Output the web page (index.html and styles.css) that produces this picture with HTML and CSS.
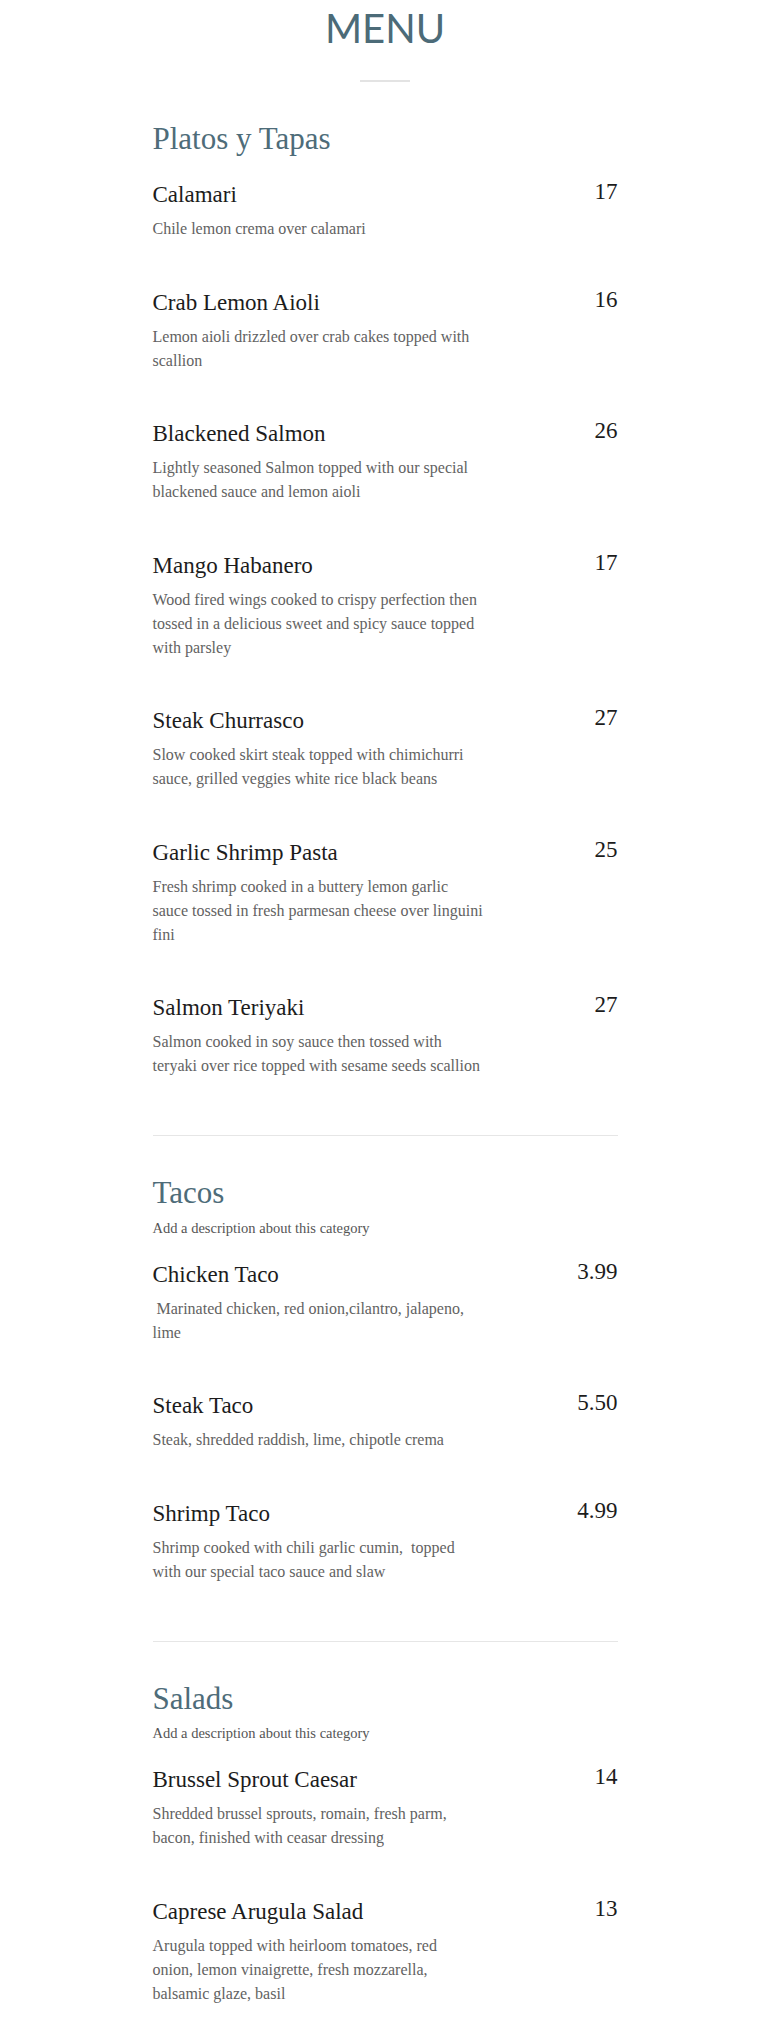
FILE: index.html
```html
<!DOCTYPE html>
<html lang="en">
<head>
<meta charset="utf-8">
<title>Menu</title>
<link rel="stylesheet" href="styles.css">
</head>
<body>
<main class="menu">
  <header class="menu-header">
    <h1 class="menu-title">MENU</h1>
    <div class="menu-rule"></div>
  </header>

  <section class="category">
    <div class="category-head">
      <h2 class="category-name">Platos y Tapas</h2>
    </div>
    <div class="items">
      <article class="item">
        <div class="item-row"><h3 class="item-name">Calamari</h3><span class="item-price">17</span></div>
        <p class="item-desc">Chile lemon crema over calamari</p>
      </article>
      <article class="item">
        <div class="item-row"><h3 class="item-name">Crab Lemon Aioli</h3><span class="item-price">16</span></div>
        <p class="item-desc">Lemon aioli drizzled over crab cakes topped with<br>scallion</p>
      </article>
      <article class="item">
        <div class="item-row"><h3 class="item-name">Blackened Salmon</h3><span class="item-price">26</span></div>
        <p class="item-desc">Lightly seasoned Salmon topped with our special<br>blackened sauce and lemon aioli</p>
      </article>
      <article class="item">
        <div class="item-row"><h3 class="item-name">Mango Habanero</h3><span class="item-price">17</span></div>
        <p class="item-desc">Wood fired wings cooked to crispy perfection then<br>tossed in a delicious sweet and spicy sauce topped<br>with parsley</p>
      </article>
      <article class="item">
        <div class="item-row"><h3 class="item-name">Steak Churrasco</h3><span class="item-price">27</span></div>
        <p class="item-desc">Slow cooked skirt steak topped with chimichurri<br>sauce, grilled veggies white rice black beans</p>
      </article>
      <article class="item">
        <div class="item-row"><h3 class="item-name">Garlic Shrimp Pasta</h3><span class="item-price">25</span></div>
        <p class="item-desc">Fresh shrimp cooked in a buttery lemon garlic<br>sauce tossed in fresh parmesan cheese over linguini<br>fini</p>
      </article>
      <article class="item">
        <div class="item-row"><h3 class="item-name">Salmon Teriyaki</h3><span class="item-price">27</span></div>
        <p class="item-desc">Salmon cooked in soy sauce then tossed with<br>teryaki over rice topped with sesame seeds scallion</p>
      </article>
    </div>
  </section>

  <section class="category">
    <div class="category-head">
      <h2 class="category-name">Tacos</h2>
      <p class="category-desc">Add a description about this category</p>
    </div>
    <div class="items">
      <article class="item">
        <div class="item-row"><h3 class="item-name">Chicken Taco</h3><span class="item-price">3.99</span></div>
        <p class="item-desc">&nbsp;Marinated chicken, red onion,cilantro, jalapeno,<br>lime</p>
      </article>
      <article class="item">
        <div class="item-row"><h3 class="item-name">Steak Taco</h3><span class="item-price">5.50</span></div>
        <p class="item-desc">Steak, shredded raddish, lime, chipotle crema</p>
      </article>
      <article class="item">
        <div class="item-row"><h3 class="item-name">Shrimp Taco</h3><span class="item-price">4.99</span></div>
        <p class="item-desc">Shrimp cooked with chili garlic cumin, &nbsp;topped<br>with our special taco sauce and slaw</p>
      </article>
    </div>
  </section>

  <section class="category category-last">
    <div class="category-head">
      <h2 class="category-name">Salads</h2>
      <p class="category-desc">Add a description about this category</p>
    </div>
    <div class="items">
      <article class="item">
        <div class="item-row"><h3 class="item-name">Brussel Sprout Caesar</h3><span class="item-price">14</span></div>
        <p class="item-desc">Shredded brussel sprouts, romain, fresh parm,<br>bacon, finished with ceasar dressing</p>
      </article>
      <article class="item">
        <div class="item-row"><h3 class="item-name">Caprese Arugula Salad</h3><span class="item-price">13</span></div>
        <p class="item-desc">Arugula topped with heirloom tomatoes, red<br>onion, lemon vinaigrette, fresh mozzarella,<br>balsamic glaze, basil</p>
      </article>
    </div>
  </section>
</main>
</body>
</html>
```

FILE: styles.css
```css
* {
  box-sizing: border-box;
}

html, body {
  margin: 0;
  padding: 0;
  background: #ffffff;
}

body {
  font-family: "Liberation Serif", "Times New Roman", serif;
  color: #1c1c1c;
}

.menu {
  width: 465px;
  margin: 0 auto;
}

.menu-header {
  display: flex;
  flex-direction: column;
  align-items: center;
  padding-top: 4px;
}

.menu-title {
  margin: 0;
  font-family: Lato, "Open Sans", sans-serif;
  font-weight: 400;
  font-size: 40px;
  line-height: 48px;
  color: #4c6b78;
}

.menu-rule {
  width: 50px;
  height: 2px;
  margin-top: 28px;
  background: #e3e3e3;
}

.category {
  padding-top: 38px;
  padding-bottom: 57px;
  border-bottom: 1px solid #e6e6e6;
}

.category-last {
  border-bottom: none;
}

.category-head {
  margin-bottom: 23px;
}

.category-name {
  margin: 0;
  font-weight: 400;
  font-size: 31px;
  line-height: 38.4px;
  color: #4e6c79;
}

.category-desc {
  margin: 5px 0 0;
  font-size: 14.5px;
  line-height: 20px;
  color: #555555;
}

.items {
  display: flex;
  flex-direction: column;
  gap: 47.5px;
}

.item-row {
  display: flex;
  justify-content: space-between;
  align-items: flex-start;
}

.item-name {
  margin: 0;
  font-weight: 400;
  font-size: 23px;
  line-height: 28px;
  color: #1c1c1c;
}

.item-price {
  font-size: 23px;
  line-height: 22px;
  color: #1c1c1c;
}

.item-desc {
  margin: 8px 0 0;
  max-width: 380px;
  font-size: 16px;
  line-height: 24px;
  color: #626262;
}
```
